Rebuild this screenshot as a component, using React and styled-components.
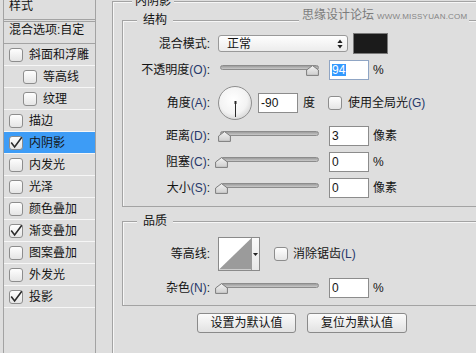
import React from "react";
import styled, { createGlobalStyle } from "styled-components";

const BG = "#dedede";
const LINE = "#a3a3a3";
const FONT = `"Liberation Sans", "Noto Sans CJK SC", sans-serif`;

const GlobalStyle = createGlobalStyle`
  html, body { margin: 0; padding: 0; overflow: hidden; background: ${BG}; }
  body { font-family: ${FONT}; font-size: 12px; color: #141414; }
  #root { width: 476px; height: 353px; }
`;

const Page = styled.div`
  position: relative;
  display: flex;
  align-items: flex-start;
  width: 476px;
  height: 353px;
  overflow: hidden;
  background: ${BG};
`;

/* ---------- sidebar ---------- */
const Sidebar = styled.aside`
  box-sizing: border-box;
  flex-shrink: 0;
  width: 93px;
  height: 372px;
  margin: -6px 0 0 3px;
  border-left: 1px solid ${LINE};
  border-right: 1px solid ${LINE};
  display: flex;
  flex-direction: column;
`;

const SideHeader = styled.div`
  display: flex;
  align-items: center;
  height: 23px;
  padding: 0 0 2px 5px;
  border-bottom: 1px solid ${LINE};
  margin-bottom: 1px;
  line-height: 14px;
`;

const BlendRow = styled.div`
  display: flex;
  align-items: flex-start;
  height: 20px;
  padding: 1px 0 0 5px;
  border-top: 1px solid ${LINE};
  border-bottom: 1px solid ${LINE};
  line-height: 14px;
  white-space: nowrap;
`;

const SideRow = styled.div`
  display: flex;
  align-items: center;
  gap: 6px;
  height: 21px;
  padding-left: ${(p) => (p.$indent ? 19 : 5)}px;
  border-bottom: 1px solid #f6f6f6;
  background: ${(p) => (p.$selected ? "#3d9cf6" : "transparent")};
  white-space: nowrap;
  line-height: 14px;
`;

/* ---------- checkbox ---------- */
const BoxSvg = styled.svg`
  flex-shrink: 0;
  display: block;
  overflow: visible;
  margin-left: ${(p) => p.$ml || 0}px;
`;

function CheckBox({ checked, ml }) {
  return (
    <BoxSvg $ml={ml} width="14" height="14" viewBox="0 0 14 14">
      <defs>
        <linearGradient id="cbfill" x1="0" y1="0" x2="0" y2="1">
          <stop offset="0" stopColor="#ffffff" />
          <stop offset="1" stopColor="#e4e4e4" />
        </linearGradient>
      </defs>
      <rect x="0.5" y="0.5" width="13" height="13" rx="2.5" fill="url(#cbfill)" stroke="#8d8d8d" />
      {checked && (
        <path d="M2.2 6.6 L5.6 10.9 L12.8 1.2" fill="none" stroke="#2a2a2a" strokeWidth="1.6" />
      )}
    </BoxSvg>
  );
}

/* ---------- main panel ---------- */
const Main = styled.div`
  flex-shrink: 0;
  width: 400px;
  margin-left: 16px;
`;

const OuterGroup = styled.fieldset`
  box-sizing: border-box;
  width: 400px;
  min-width: 0;
  margin: -6px 0 0 0;
  padding: 0 0 60px 0;
  border: 1px solid ${LINE};
  box-shadow: inset 1px 1px 0 #f6f6f6;
`;

const Group = styled.fieldset`
  box-sizing: border-box;
  width: 390px;
  min-width: 0;
  margin: ${(p) => p.$mt}px 0 0 9px;
  padding: 0 0 ${(p) => p.$pb}px 0;
  border: 1px solid ${LINE};
  box-shadow: inset 1px 1px 0 #f6f6f6;
`;

const Legend = styled.legend`
  margin-left: ${(p) => p.$ml}px;
  padding: 0 ${(p) => p.$pad}px;
  line-height: 14px;
  font-size: 12px;
  background: ${BG};
  color: #141414;
`;

const Row = styled.div`
  display: flex;
  align-items: center;
  height: ${(p) => p.$h}px;
  margin-top: ${(p) => p.$mt}px;
`;

const Label = styled.div`
  flex-shrink: 0;
  width: 87px;
  text-align: right;
  white-space: nowrap;
  line-height: 14px;
`;

const Key = styled.span`
  color: #27386a;
`;

const Text = styled.span`
  flex-shrink: 0;
  white-space: nowrap;
  line-height: 14px;
  margin-left: ${(p) => p.$ml || 0}px;
`;

const Select = styled.div`
  box-sizing: border-box;
  flex-shrink: 0;
  width: 130px;
  height: 17px;
  margin-left: 8px;
  padding: 0 4px 0 8px;
  border: 1px solid #999;
  border-radius: 3px;
  background: linear-gradient(#fefefe, #ececec);
  display: flex;
  align-items: center;
  justify-content: space-between;
  line-height: 14px;
`;

const Swatch = styled.div`
  box-sizing: border-box;
  flex-shrink: 0;
  width: 35px;
  height: 21px;
  margin-left: 5px;
  border: 1px solid #7a7a7a;
  background: #1b1b1b;
`;

const SliderWrap = styled.div`
  position: relative;
  flex-shrink: 0;
  align-self: flex-start;
  width: 99px;
  height: 12px;
  margin: 5px 0 0 10px;
`;

const Track = styled.div`
  box-sizing: border-box;
  height: 5px;
  border: 1px solid #8c8c8c;
  border-radius: 3px;
  background: linear-gradient(#9c9c9c, #c9c9c9);
`;

const Thumb = styled.svg`
  position: absolute;
  top: 0;
  display: block;
`;

function Slider({ value, max = 100 }) {
  const left = -5 + (value / max) * 97;
  return (
    <SliderWrap>
      <Track />
      <Thumb width="13" height="11" viewBox="0 0 13 11" style={{ left }}>
        <defs>
          <linearGradient id="thumbfill" x1="0" y1="0" x2="0" y2="1">
            <stop offset="0" stopColor="#f4f4f4" />
            <stop offset="1" stopColor="#cdcdcd" />
          </linearGradient>
        </defs>
        <path d="M6.5 0.6 L12.4 5 L12.4 10.4 L0.6 10.4 L0.6 5 Z" fill="url(#thumbfill)" stroke="#7c7c7c" />
      </Thumb>
    </SliderWrap>
  );
}

const Field = styled.div`
  box-sizing: border-box;
  flex-shrink: 0;
  width: 40px;
  height: 20px;
  margin-left: ${(p) => (p.$ml == null ? 10 : p.$ml)}px;
  padding-left: 2px;
  border: 1px solid ${(p) => (p.$focus ? "#8fa5c4" : "#8c8c8c")};
  background: #fff;
  display: flex;
  align-items: center;
  line-height: 12px;
`;

const Selection = styled.span`
  background: #3399ff;
  color: #fff;
  padding-right: 1px;
`;

const DialSvg = styled.svg`
  flex-shrink: 0;
  display: block;
  margin-left: 8px;
`;

function Dial() {
  return (
    <DialSvg width="34" height="34" viewBox="0 0 34 34">
      <defs>
        <radialGradient id="dialfill" cx="0.45" cy="0.4" r="0.6">
          <stop offset="0" stopColor="#ffffff" />
          <stop offset="0.7" stopColor="#f3f3f3" />
          <stop offset="1" stopColor="#d9d9d9" />
        </radialGradient>
      </defs>
      <circle cx="17" cy="17" r="16.5" fill="url(#dialfill)" stroke="#8e8e8e" />
      <line x1="17.5" y1="16" x2="17.5" y2="31" stroke="#2a2a2a" strokeWidth="1" />
      <rect x="16.5" y="15" width="2" height="3" fill="#2a2a2a" />
    </DialSvg>
  );
}

const Contour = styled.div`
  box-sizing: border-box;
  flex-shrink: 0;
  display: flex;
  width: 42px;
  height: 34px;
  margin-left: 8px;
  border: 1px solid #8a8a8a;
  background: #fff;
`;

const ContourArrow = styled.div`
  width: 7px;
  border-left: 1px solid #9c9c9c;
  background: linear-gradient(#fafafa, #e8e8e8);
  display: flex;
  align-items: center;
  justify-content: center;
`;

const Buttons = styled.div`
  display: flex;
  gap: 11px;
  margin: 7px 0 0 84px;
`;

const Button = styled.button`
  box-sizing: border-box;
  width: ${(p) => p.$w}px;
  height: 20px;
  padding: 0;
  border: 1px solid #8a8a8a;
  border-radius: 3px;
  background: linear-gradient(#fbfbfb, #e2e2e2);
  font-family: ${FONT};
  font-size: 12px;
  line-height: 14px;
  color: #141414;
`;

const Watermark = styled.div`
  position: absolute;
  top: 8px;
  left: 299px;
  height: 14px;
  padding: 0 2px 0 3px;
  display: flex;
  align-items: center;
  gap: 3px;
  background: ${BG};
  color: #7c7c7c;
  white-space: nowrap;
`;

const WmCn = styled.span`
  font-size: 12px;
  line-height: 14px;
`;

const WmEn = styled.span`
  font-family: "Liberation Sans", sans-serif;
  font-size: 8px;
  letter-spacing: 0.2px;
  color: #858585;
  margin-top: 2px;
`;

const layers = [
  { name: "斜面和浮雕" },
  { name: "等高线", indent: true },
  { name: "纹理", indent: true },
  { name: "描边" },
  { name: "内阴影", checked: true, selected: true },
  { name: "内发光" },
  { name: "光泽" },
  { name: "颜色叠加" },
  { name: "渐变叠加", checked: true },
  { name: "图案叠加" },
  { name: "外发光" },
  { name: "投影", checked: true },
];

export default function App() {
  return (
    <>
      <GlobalStyle />
      <Page>
        <Sidebar>
          <SideHeader>样式</SideHeader>
          <BlendRow>混合选项:自定</BlendRow>
          {layers.map((l) => (
            <SideRow key={l.name} $indent={l.indent} $selected={l.selected}>
              <CheckBox checked={l.checked} />
              <span>{l.name}</span>
            </SideRow>
          ))}
        </Sidebar>

        <Main>
          <OuterGroup>
            <Legend $ml={19} $pad={3}>内阴影</Legend>

            <Group $mt={5} $pb={8}>
              <Legend $ml={14} $pad={6}>结构</Legend>

              <Row $h={21} $mt={6}>
                <Label>混合模式:</Label>
                <Select>
                  <span>正常</span>
                  <svg width="6" height="10" viewBox="0 0 6 10">
                    <path d="M3 0.5 L5.6 4 L0.4 4 Z M3 9.5 L5.6 6 L0.4 6 Z" fill="#222" />
                  </svg>
                </Select>
                <Swatch />
              </Row>

              <Row $h={20} $mt={6}>
                <Label>
                  不透明度<Key>(O)</Key>:
                </Label>
                <Slider value={94} />
                <Field $focus>
                  <Selection>94</Selection>
                </Field>
                <Text $ml={4}>%</Text>
              </Row>

              <Row $h={33} $mt={6}>
                <Label>
                  角度<Key>(A)</Key>:
                </Label>
                <Dial />
                <Field $ml={6}>-90</Field>
                <Text $ml={5}>度</Text>
                <CheckBox ml={13} />
                <Text $ml={6}>
                  使用全局光<Key>(G)</Key>
                </Text>
              </Row>

              <Row $h={20} $mt={7}>
                <Label>
                  距离<Key>(D)</Key>:
                </Label>
                <Slider value={3} />
                <Field>3</Field>
                <Text $ml={4}>像素</Text>
              </Row>

              <Row $h={20} $mt={6}>
                <Label>
                  阻塞<Key>(C)</Key>:
                </Label>
                <Slider value={0} />
                <Field>0</Field>
                <Text $ml={4}>%</Text>
              </Row>

              <Row $h={20} $mt={6}>
                <Label>
                  大小<Key>(S)</Key>:
                </Label>
                <Slider value={0} />
                <Field>0</Field>
                <Text $ml={4}>像素</Text>
              </Row>
            </Group>

            <Group $mt={7} $pb={7}>
              <Legend $ml={14} $pad={6}>品质</Legend>

              <Row $h={34} $mt={9}>
                <Label>等高线:</Label>
                <Contour>
                  <svg width="33" height="32" viewBox="0 0 33 32" style={{ display: "block" }}>
                    <polygon points="0,32 33,0 33,32" fill="#9b9b9b" />
                  </svg>
                  <ContourArrow>
                    <svg width="5" height="3" viewBox="0 0 5 3">
                      <path d="M0 0 L5 0 L2.5 3 Z" fill="#222" />
                    </svg>
                  </ContourArrow>
                </Contour>
                <CheckBox ml={14} />
                <Text $ml={5}>
                  消除锯齿<Key>(L)</Key>
                </Text>
              </Row>

              <Row $h={20} $mt={7}>
                <Label>
                  杂色<Key>(N)</Key>:
                </Label>
                <Slider value={0} />
                <Field>0</Field>
                <Text $ml={4}>%</Text>
              </Row>
            </Group>

            <Buttons>
              <Button $w={99}>设置为默认值</Button>
              <Button $w={100}>复位为默认值</Button>
            </Buttons>
          </OuterGroup>
        </Main>

        <Watermark>
          <WmCn>思缘设计论坛</WmCn>
          <WmEn>WWW.MISSYUAN.COM</WmEn>
        </Watermark>
      </Page>
    </>
  );
}
